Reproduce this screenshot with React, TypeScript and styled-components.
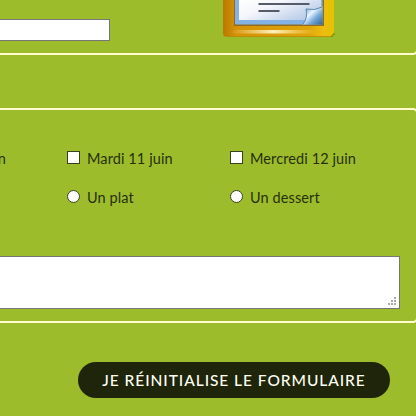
import React from 'react';
import styled, { createGlobalStyle } from 'styled-components';

const GlobalStyle = createGlobalStyle`
  * { box-sizing: border-box; }
  body { margin: 0; background: #9dbc2c; overflow: hidden; }
`;

const Page = styled.main`
  display: flex;
  flex-direction: column;
  width: 416px;
  height: 416px;
  overflow: hidden;
  background: #9dbc2c;
  color: #26310a;
  font-family: Lato, 'Open Sans', sans-serif;
`;

const Panel = styled.section<{ $height: number }>`
  flex: none;
  width: 431px;
  height: ${p => p.$height}px;
  margin-left: -13px;
  border: 2px solid #fffdd0;
  border-radius: 5px;
`;

const ContactPanel = styled(Panel)`
  display: flex;
  align-items: flex-start;
  border-top: 0;
  border-top-right-radius: 0;
`;

const TextInput = styled.input`
  width: 112px;
  height: 22px;
  margin: 19px 113px 0 9px;
  border: 1px solid #767676;
  border-radius: 0;
  background: #fff;
`;

const NotePicture = styled.svg`
  display: block;
  flex: none;
`;

const MenuPanel = styled(Panel)`
  display: flex;
  flex-direction: column;
  margin-top: 53px;
  padding-top: 41px;
`;

const Choices = styled.div`
  display: grid;
  grid-template-columns: 78px 163px 1fr;
  height: 39px;
`;

const Choice = styled.label`
  display: flex;
  align-items: flex-start;
  gap: 7px;
  font-size: 14.5px;
  line-height: 17px;
  white-space: nowrap;
`;

const Caption = styled.span`
  margin-top: -1px;
  letter-spacing: 0.1px;
`;

const PreviousChoice = styled(Choice)`
  justify-content: flex-end;
  width: 17px;
`;

const Mark = styled.input`
  appearance: none;
  flex: none;
  width: 13px;
  height: 13px;
  margin: 0;
  border: 1px solid #38411e;
  border-radius: ${p => (p.type === 'radio' ? '50%' : '0')};
  background: #fff;
`;

const CommentBox = styled.div`
  display: flex;
  justify-content: flex-end;
  align-items: flex-end;
  width: 410px;
  height: 53px;
  margin-top: 27px;
  margin-left: 1px;
  padding: 2px;
  border: 1px solid #767676;
  background: #fff;
`;

const Actions = styled.div`
  display: flex;
  justify-content: flex-end;
  padding: 39px 26px 0 0;
`;

const ResetButton = styled.button`
  width: 312px;
  height: 36px;
  padding: 0;
  border: 0;
  border-radius: 18px;
  background: #1e250a;
  color: #fffff2;
  font-family: Lato, sans-serif;
  font-size: 15.5px;
  font-weight: 500;
  line-height: 36px;
  letter-spacing: 0.95px;
  text-transform: uppercase;
  white-space: nowrap;
`;

function NoteIcon() {
  return (
    <NotePicture width="112" height="38" viewBox="0 0 112 38">
      <defs>
        <linearGradient id="gold">
          <stop stopColor="#ba7900" /><stop offset=".12" stopColor="#d49208" />
          <stop offset=".78" stopColor="#e0a509" /><stop offset=".9" stopColor="#edbd10" /><stop offset="1" stopColor="#e4c300" />
        </linearGradient>
        <linearGradient id="shine">
          <stop stopColor="#ffe7a0" stopOpacity="0" /><stop offset=".5" stopColor="#fff0bd" /><stop offset="1" stopColor="#ffe27a" stopOpacity="0" />
        </linearGradient>
        <linearGradient id="paper" x2="1" y2=".6">
          <stop stopColor="#fff" /><stop offset=".4" stopColor="#f5f6fc" /><stop offset="1" stopColor="#b9cce8" />
        </linearGradient>
        <linearGradient id="curl" x2="1" y2="1">
          <stop stopColor="#4c83bb" /><stop offset=".4" stopColor="#e9f5ff" /><stop offset=".65" stopColor="#78a9da" /><stop offset="1" stopColor="#2f6398" />
        </linearGradient>
      </defs>
      <path d="M0 0H111V33L108 36.5H3Q0 36.5 0 33Z" fill="url(#gold)" />
      <path d="M0 33Q1 36.5 4 36.5H108" fill="none" stroke="#bd8200" strokeOpacity=".7" />
      <path d="M11 0V26H101V0" fill="#8d6b20" />
      <path d="M12 0H99.5V24.5H12Z" fill="#83b3e6" />
      <path d="M16 0H98V20H16Z" fill="url(#paper)" />
      <path d="M35.5 4H86.5M35.5 11H56.5" fill="none" stroke="#555b67" strokeWidth="2" />
      <path d="M99.5 6V24.5H80Q85 19 83 9Q94 12 99.5 6Z" fill="url(#curl)" />
      <path d="M80 24Q85 18 83 9Q92 11 99 7" fill="none" stroke="#4f80ae" strokeWidth=".9" />
      <path d="M7 30H94V33.5H7Z" fill="url(#shine)" />
      <path d="M108 37L112 33" fill="none" stroke="#8c8e08" strokeWidth="1.5" />
    </NotePicture>
  );
}

function ResizeGrip() {
  return (
    <svg width="9" height="9" viewBox="0 0 9 9" fill="#aaa">
      <path d="M6 0h2v2H6zM3 3h2v2H3zM6 3h2v2H6zM0 6h2v2H0zM3 6h2v2H3zM6 6h2v2H6z" />
    </svg>
  );
}

export default function App() {
  return (
    <Page>
      <GlobalStyle />
      <ContactPanel $height={55}>
        <TextInput aria-label="Nom" />
        <NoteIcon />
      </ContactPanel>
      <MenuPanel $height={215}>
        <Choices>
          <PreviousChoice><Caption>n</Caption></PreviousChoice>
          <Choice><Mark type="checkbox" /><Caption>Mardi 11 juin</Caption></Choice>
          <Choice><Mark type="checkbox" /><Caption>Mercredi 12 juin</Caption></Choice>
        </Choices>
        <Choices>
          <span />
          <Choice><Mark type="radio" name="menu" /><Caption>Un plat</Caption></Choice>
          <Choice><Mark type="radio" name="menu" /><Caption>Un dessert</Caption></Choice>
        </Choices>
        <CommentBox><ResizeGrip /></CommentBox>
      </MenuPanel>
      <Actions><ResetButton type="reset">Je réinitialise le formulaire</ResetButton></Actions>
    </Page>
  );
}
